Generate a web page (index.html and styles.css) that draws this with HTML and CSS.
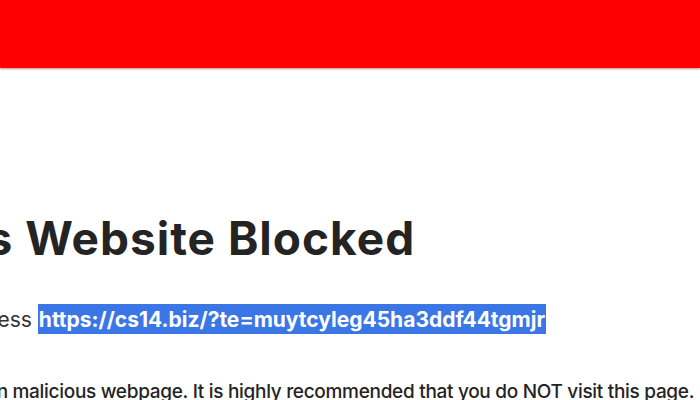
FILE: index.html
```html
<!DOCTYPE html>
<html>
<head>
<meta charset="utf-8">
<link rel="stylesheet" href="styles.css">
</head>
<body>
<header class="topbar"></header>
<main class="content">
  <h1 class="title"><span class="clip clip-title">Dangerous Website Blocked</span></h1>
  <p class="line addr"><span class="clip clip-addr">You attempted to access <span class="url">https://cs14.biz/?te=muytcyleg45ha3ddf44tgmjr</span></span></p>
  <p class="line warn"><span class="clip clip-warn">This is a known malicious webpage. It is highly recommended that you do NOT visit this page.</span></p>
</main>
</body>
</html>
```
FILE: styles.css
```css
html, body {
  margin: 0;
  padding: 0;
  background: #ffffff;
  width: 700px;
  height: 400px;
  overflow: hidden;
  font-family: Inter, "Noto Sans", sans-serif;
  color: #242424;
}
.topbar {
  height: 68px;
  background: #ff0000;
  box-shadow: 0 1px 2px rgba(120, 0, 0, 0.45);
}
.content {
  display: flex;
  flex-direction: column;
  padding-top: 142px;
  white-space: nowrap;
}
.title {
  margin: 0;
  font-size: 46px;
  font-weight: 700;
  line-height: 56px;
  letter-spacing: 1px;
}
.clip { display: inline-block; }
.clip-title { margin-left: -241px; }
.line {
  margin: 0;
  line-height: 30px;
}
.addr {
  margin-top: 39px;
  font-size: 21px;
  color: #333333;
}
.clip-addr { margin-left: -213px; }
.url {
  background: #3a76e6;
  color: #ffffff;
  font-weight: 700;
  padding: 3px 1px 2px;
}
.warn {
  margin-top: 42px;
  font-size: 19px;
  font-weight: 500;
  letter-spacing: -0.3px;
}
.clip-warn { margin-left: -128px; }
```
